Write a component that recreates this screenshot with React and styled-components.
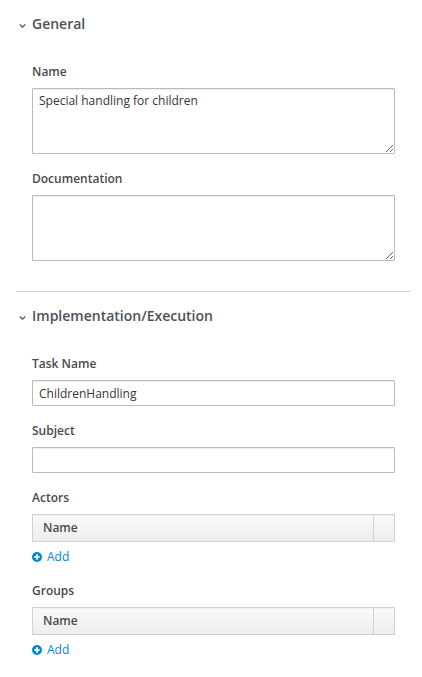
import React from "react";
import styled, { createGlobalStyle } from "styled-components";

const Global = createGlobalStyle`
  html, body { margin: 0; padding: 0; background: #fff; }
  body { font-family: "Open Sans", "Liberation Sans", sans-serif; color: #363636; }
  * { box-sizing: border-box; }
`;

const Page = styled.div`
  width: 394px;
  margin-left: 16px;
`;

const Section = styled.section`
  padding-top: 14px;
  padding-bottom: ${(p) => p.$pb || 0}px;
  border-bottom: ${(p) => (p.$divider ? "1px solid #d1d1d1" : "none")};
`;

const Header = styled.div`
  display: flex;
  align-items: center;
  gap: 6px;
  padding-left: 3px;
  height: 20px;
  font-size: 14px;
  line-height: 20px;
  font-weight: 600;
  color: #4d5258;
`;

const Body = styled.div`
  padding: 29px 15px 0 16px;
  display: flex;
  flex-direction: column;
  gap: 16px;
`;

const Field = styled.div`
  display: flex;
  flex-direction: column;
`;

const Label = styled.label`
  font-size: 12px;
  line-height: 18px;
  font-weight: 600;
  color: #4a4a4a;
  margin-bottom: 7px;
`;

const TextArea = styled.textarea`
  width: 363px;
  height: 66px;
  margin: 0;
  border: 1px solid #bbb;
  border-radius: 1px;
  padding: 2px 6px;
  font-family: "Open Sans", "Liberation Sans", sans-serif;
  font-size: 12px;
  line-height: 20px;
  color: #363636;
  box-shadow: inset 0 1px 1px rgba(3, 3, 3, 0.075);
  outline: none;
  display: block;
`;

const Input = styled.input`
  width: 363px;
  height: 26px;
  margin: 0;
  border: 1px solid #bbb;
  border-radius: 1px;
  padding: 2px 6px;
  font-family: "Open Sans", "Liberation Sans", sans-serif;
  font-size: 12px;
  line-height: 20px;
  color: #363636;
  box-shadow: inset 0 1px 1px rgba(3, 3, 3, 0.075);
  outline: none;
  display: block;
`;

const Table = styled.table`
  width: 363px;
  border-collapse: collapse;
  table-layout: fixed;
`;

const Th = styled.th`
  height: 27px;
  padding: 0 10px;
  text-align: left;
  font-size: 12px;
  line-height: 18px;
  font-weight: 600;
  color: #4a4a4a;
  border: 1px solid #d1d1d1;
  background: linear-gradient(to bottom, #fafafa 0%, #ededed 100%);
  width: ${(p) => (p.$w ? `${p.$w}px` : "auto")};
`;

const AddLink = styled.a`
  display: flex;
  align-items: center;
  gap: 5px;
  margin-top: 6px;
  font-size: 12px;
  line-height: 18px;
  color: #0088ce;
  text-decoration: none;
  cursor: pointer;
`;

const Chevron = () => (
  <svg width="7" height="6" viewBox="0 0 7 6" style={{ marginTop: 3 }}>
    <polyline points="0.8,1.5 3.5,4.2 6.2,1.5" fill="none" stroke="#4d5258" strokeWidth="1.2" />
  </svg>
);

const PlusCircle = () => (
  <svg width="10" height="10" viewBox="0 0 10 10">
    <circle cx="5" cy="5" r="5" fill="#0088ce" />
    <rect x="2.3" y="4.1" width="5.4" height="1.8" fill="#fff" />
    <rect x="4.1" y="2.3" width="1.8" height="5.4" fill="#fff" />
  </svg>
);

const ListField = ({ label }) => (
  <Field>
    <Label>{label}</Label>
    <Table>
      <thead>
        <tr>
          <Th>Name</Th>
          <Th $w={21}></Th>
        </tr>
      </thead>
    </Table>
    <AddLink>
      <PlusCircle />
      Add
    </AddLink>
  </Field>
);

export default function App() {
  return (
    <>
      <Global />
      <Page>
        <Section $divider $pb={30}>
          <Header>
            <Chevron />
            General
          </Header>
          <Body>
            <Field>
              <Label>Name</Label>
              <TextArea defaultValue="Special handling for children" />
            </Field>
            <Field>
              <Label>Documentation</Label>
              <TextArea defaultValue="" />
            </Field>
          </Body>
        </Section>
        <Section>
          <Header>
            <Chevron />
            Implementation/Execution
          </Header>
          <Body>
            <Field>
              <Label>Task Name</Label>
              <Input defaultValue="ChildrenHandling" />
            </Field>
            <Field>
              <Label>Subject</Label>
              <Input defaultValue="" />
            </Field>
            <ListField label="Actors" />
            <ListField label="Groups" />
          </Body>
        </Section>
      </Page>
    </>
  );
}
